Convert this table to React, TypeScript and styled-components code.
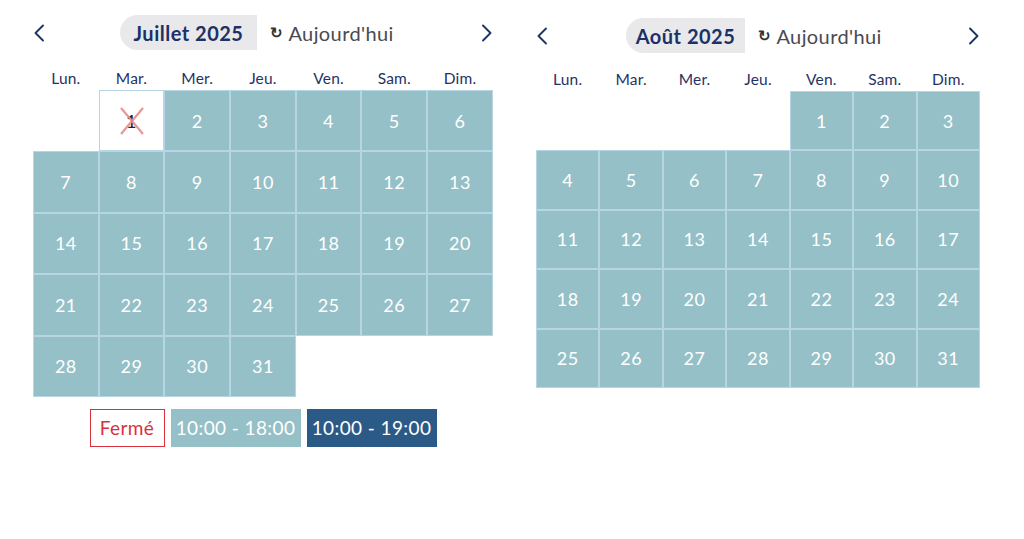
import React from "react";
import styled, { createGlobalStyle } from "styled-components";

const Global = createGlobalStyle`
  html, body { margin: 0; padding: 0; background: #fff; }
  body { font-family: "Lato", "Open Sans", sans-serif; }
`;

const Page = styled.div`
  display: flex;
  align-items: flex-start;
  padding-left: 33px;
  gap: 43px;
  width: 1024px;
  height: 539px;
  box-sizing: border-box;
`;

const Widget = styled.div<{ $w: number; $top: number }>`
  width: ${(p) => p.$w}px;
  padding-top: ${(p) => p.$top}px;
  display: flex;
  flex-direction: column;
`;

const Header = styled.div<{ $h: number }>`
  display: flex;
  align-items: center;
  height: ${(p) => p.$h}px;
`;

const Chevron = styled.button`
  border: 0;
  background: none;
  padding: 0;
  width: 12px;
  height: 20px;
  display: flex;
  align-items: center;
  justify-content: center;
  cursor: pointer;
`;

const Center = styled.div<{ $ml: number }>`
  display: flex;
  align-items: center;
  margin-left: ${(p) => p.$ml}px;
  margin-right: auto;
  height: 100%;
`;

const Pill = styled.div<{ $w: number }>`
  width: ${(p) => p.$w}px;
  height: 100%;
  background: #e9e9eb;
  border-radius: 18px 0 0 18px;
  display: flex;
  align-items: center;
  justify-content: center;
  font-weight: 700;
  font-size: 20px;
  color: #1c3166;
  letter-spacing: 0.5px;
`;

const Today = styled.div`
  margin-left: 13px;
  font-size: 20px;
  letter-spacing: 0.4px;
  color: #4a4a4f;
  display: flex;
  align-items: center;
  gap: 5px;
`;

const TodayIcon = styled.span`
  font-size: 15px;
  font-weight: 700;
  color: #333;
`;

const Weekdays = styled.div<{ $cw: number; $h: number }>`
  display: grid;
  grid-template-columns: repeat(7, ${(p) => p.$cw}px);
  height: ${(p) => p.$h}px;
  align-items: end;
  padding-bottom: 3px;
  box-sizing: border-box;
`;

const Weekday = styled.div`
  text-align: center;
  font-size: 15.5px;
  letter-spacing: 0.2px;
  color: #1f3366;
`;

const Grid = styled.div<{ $cw: number; $ch: number }>`
  display: grid;
  grid-template-columns: repeat(7, ${(p) => p.$cw}px);
  grid-auto-rows: ${(p) => p.$ch}px;
`;

const Cell = styled.div<{ $kind: "open" | "empty" | "closed" }>`
  box-sizing: border-box;
  position: relative;
  display: flex;
  align-items: center;
  justify-content: center;
  font-size: 18px;
  letter-spacing: 0.5px;
  color: ${(p) => (p.$kind === "closed" ? "#222" : "#fff")};
  background: ${(p) => (p.$kind === "open" ? "#95c0c7" : "#fff")};
  border: ${(p) => (p.$kind === "empty" ? "0" : "1px solid #b6d6e6")};
`;

const Cross = styled.svg`
  position: absolute;
  left: 50%;
  top: 50%;
  width: 28px;
  height: 30px;
  transform: translate(-50%, -50%);
`;

const Legend = styled.div`
  display: flex;
  justify-content: center;
  gap: 6px;
  margin-top: 12px;
`;

const Tag = styled.div<{ $variant: "closed" | "light" | "dark" }>`
  box-sizing: border-box;
  height: 38px;
  width: ${(p) => (p.$variant === "closed" ? 75 : 130)}px;
  display: flex;
  align-items: center;
  justify-content: center;
  font-size: 19px;
  letter-spacing: 0.4px;
  color: ${(p) => (p.$variant === "closed" ? "#d8313c" : "#fff")};
  background: ${(p) =>
    p.$variant === "closed" ? "#fff" : p.$variant === "light" ? "#95c0c7" : "#2c5a87"};
  border: ${(p) => (p.$variant === "closed" ? "1px solid #d8313c" : "0")};
`;

const days = ["Lun.", "Mar.", "Mer.", "Jeu.", "Ven.", "Sam.", "Dim."];

const Left = () => (
  <svg width="12" height="20" viewBox="0 0 12 20">
    <path d="M10 2.5 L2.5 10 L10 17.5" fill="none" stroke="#1f3366" strokeWidth="1.9" strokeLinecap="round" strokeLinejoin="round" />
  </svg>
);
const Right = () => (
  <svg width="12" height="20" viewBox="0 0 12 20">
    <path d="M2 2.5 L9.5 10 L2 17.5" fill="none" stroke="#1f3366" strokeWidth="1.9" strokeLinecap="round" strokeLinejoin="round" />
  </svg>
);

type CalProps = {
  title: string;
  offset: number;
  count: number;
  closed?: number[];
  w: number;
  cw: number;
  ch: number;
  top: number;
  headH: number;
  dayH: number;
  pillW: number;
  centerMl: number;
  legend?: boolean;
};

const Calendar = ({ title, offset, count, closed = [], w, cw, ch, top, headH, dayH, pillW, centerMl, legend }: CalProps) => {
  const cells: React.ReactNode[] = [];
  for (let i = 0; i < offset; i++) cells.push(<Cell key={"e" + i} $kind="empty" />);
  for (let d = 1; d <= count; d++) {
    const isClosed = closed.includes(d);
    cells.push(
      <Cell key={d} $kind={isClosed ? "closed" : "open"}>
        {d}
        {isClosed && (
          <Cross viewBox="0 0 28 30">
            <path d="M3 2 L25 28 M25 2 L3 28" stroke="#e88a8c" strokeWidth="2.2" opacity="0.9" />
          </Cross>
        )}
      </Cell>
    );
  }
  return (
    <Widget $w={w} $top={top}>
      <Header $h={headH}>
        <Chevron><Left /></Chevron>
        <Center $ml={centerMl}>
          <Pill $w={pillW}>{title}</Pill>
          <Today><TodayIcon>↻</TodayIcon>Aujourd'hui</Today>
        </Center>
        <Chevron><Right /></Chevron>
      </Header>
      <Weekdays $cw={cw} $h={dayH}>
        {days.map((d) => (
          <Weekday key={d}>{d}</Weekday>
        ))}
      </Weekdays>
      <Grid $cw={cw} $ch={ch}>{cells}</Grid>
      {legend && (
        <Legend>
          <Tag $variant="closed">Fermé</Tag>
          <Tag $variant="light">10:00 - 18:00</Tag>
          <Tag $variant="dark">10:00 - 19:00</Tag>
        </Legend>
      )}
    </Widget>
  );
};

export default function App() {
  return (
    <>
      <Global />
      <Page>
        <Calendar
          title="Juillet 2025"
          offset={1}
          count={31}
          closed={[1]}
          w={460}
          cw={65.7}
          ch={61.4}
          top={15}
          headH={35}
          dayH={40}
          pillW={137}
          centerMl={75}
          legend
        />
        <Calendar
          title="Août 2025"
          offset={4}
          count={31}
          w={444}
          cw={63.43}
          ch={59.4}
          top={18}
          headH={35}
          dayH={38}
          pillW={119}
          centerMl={78}
        />
      </Page>
    </>
  );
}
